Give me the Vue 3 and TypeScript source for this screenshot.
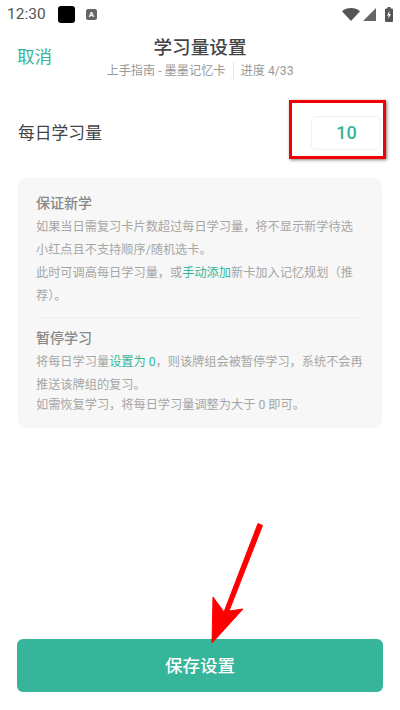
<script setup lang="ts">
import { ref } from "vue"

const dailyAmount = ref(10)
const progress = ref("4/33")
</script>

<template>
  <div class="page">
    <div class="status-bar">
      <span class="time">12:30</span>
      <span class="black-app"></span>
      <span class="a-icon">A</span>
      <div class="status-right">
        <svg width="18" height="13" viewBox="0 0 18 13"><path d="M0 3.200C2.400 1.200 5.500 0 9 0s6.600 1.200 9 3.200L9 13z" fill="#555" /></svg>
        <svg class="signal" width="13" height="13" viewBox="0 0 13 13"><path d="M0 13L13 0v13z" fill="#666" /></svg>
        <svg class="battery" width="8" height="15" viewBox="0 0 8 15"><path d="M2.500 0h3v1.500H7a1 1 0 0 1 1 1V14a1 1 0 0 1-1 1H1a1 1 0 0 1-1-1V2.500a1 1 0 0 1 1-1h1.500z" fill="#555" /><path d="M4.600 3.500L2 8.500h1.700L3.200 12l2.800-5H4.200z" fill="#fff" /></svg>
      </div>
    </div>

    <header class="nav">
      <span class="cancel">取消</span>
      <div class="nav-center">
        <div class="title">学习量设置</div>
        <div class="subtitle">
          <span>上手指南 - 墨墨记忆卡</span>
          <i class="sep"></i>
          <span>进度 {{ progress }}</span>
        </div>
      </div>
    </header>

    <div class="amount-row">
      <span class="amount-label">每日学习量</span>
      <div class="amount-input">{{ dailyAmount }}</div>
      <div class="highlight"></div>
    </div>

    <div class="info-card">
      <h3>保证新学</h3>
      <p>如果当日需复习卡片数超过每日学习量，将不显示新学待选小红点且不支持顺序/随机选卡。</p>
      <p>此时可调高每日学习量，或<em>手动添加</em>新卡加入记忆规划（推荐）。</p>
      <div class="divider"></div>
      <h3>暂停学习</h3>
      <p>将每日学习量<em>设置为 0</em>，则该牌组会被暂停学习，系统不会再推送该牌组的复习。</p>
      <p class="last">如需恢复学习，将每日学习量调整为大于 0 即可。</p>
    </div>

    <button class="save">保存设置</button>

    <svg class="arrow" width="60" height="130" viewBox="0 0 60 130">
      <path d="M50 3.500L54.500 5.500 21 91 35 89 4 123 5 77 16 92z" fill="#fe0000" stroke="#fe0000" stroke-width="1" stroke-linejoin="round" />
    </svg>
  </div>
</template>

<style scoped>
.page {
  position: relative;
  width: 400px;
  height: 710px;
  display: flex;
  flex-direction: column;
  background: #fff;
  font-family: Roboto, "Noto Sans CJK SC", sans-serif;
  overflow: hidden;
}

.status-bar {
  height: 28px;
  display: flex;
  align-items: center;
  padding: 0 7px;
  box-sizing: border-box;
}

.time {
  font-size: 15.500px;
  color: #555;
  width: 51px;
}

.black-app {
  width: 17px;
  height: 17px;
  border-radius: 3px;
  background: #000;
}

.a-icon {
  width: 11px;
  height: 11px;
  margin-left: 11px;
  border-radius: 2px;
  background: #666;
  color: #fff;
  font-size: 8px;
  font-weight: 700;
  line-height: 11px;
  text-align: center;
}

.status-right {
  margin-left: auto;
  display: flex;
  align-items: center;
}

.signal {
  margin-left: 3px;
}

.battery {
  margin-left: 9px;
}

.nav {
  position: relative;
  height: 52px;
  display: flex;
  justify-content: center;
}

.cancel {
  position: absolute;
  left: 17px;
  top: 17px;
  font-size: 17.500px;
  line-height: 24px;
  color: #36b59a;
}

.nav-center {
  display: flex;
  flex-direction: column;
  align-items: center;
}

.title {
  margin-top: 8px;
  font-size: 18.600px;
  font-weight: 500;
  line-height: 25px;
  color: #444;
}

.subtitle {
  display: flex;
  align-items: center;
  margin-top: 1px;
  font-size: 12.200px;
  line-height: 18px;
  color: #999;
}

.sep {
  width: 1px;
  height: 18px;
  margin: 0 7px;
  background: #e6e6e6;
}

.amount-row {
  position: relative;
  margin-top: 36px;
  height: 34px;
  padding: 0 19px 0 18px;
  display: flex;
  align-items: center;
  justify-content: space-between;
}

.amount-label {
  margin-top: -2px;
  font-size: 16.800px;
  color: #444;
}

.amount-input {
  width: 70px;
  height: 34px;
  box-sizing: border-box;
  border: 1px solid #f0f0f0;
  border-radius: 5px;
  padding-left: 1px;
  font-size: 18px;
  font-weight: 500;
  line-height: 32px;
  text-align: center;
  color: #36b59a;
}

.highlight {
  position: absolute;
  left: 289px;
  top: -16px;
  width: 97px;
  height: 59px;
  box-sizing: border-box;
  border: 3px solid #f00000;
  box-shadow: 1px 1px 3px rgba(0, 0, 0, 0.5);
}

.info-card {
  margin: 28px 18px 0;
  height: 250px;
  box-sizing: border-box;
  padding: 15px 18px 0;
  border-radius: 8px;
  background: #f7f7f7;
}

.info-card h3 {
  margin: 0 0 3px;
  font-size: 14px;
  font-weight: 500;
  line-height: 20px;
  color: #888;
}

.info-card p {
  margin: 0;
  font-size: 12.200px;
  line-height: 23px;
  color: #a6a6a6;
}

.info-card p.last {
  margin-top: -3px;
}

.info-card em {
  font-style: normal;
  color: #36b59a;
}

.divider {
  height: 1px;
  margin: 9px 0 10px;
  background: #efefef;
}

.save {
  margin: auto 17px 18px;
  height: 53px;
  padding: 0 0 2px;
  border: none;
  border-radius: 6px;
  background: #36b59a;
  color: #fff;
  font-family: inherit;
  font-size: 17.500px;
  font-weight: 500;
}

.arrow {
  position: absolute;
  left: 208px;
  top: 520px;
}
</style>

<style>
body {
  margin: 0;
  background: #fff;
}
</style>
